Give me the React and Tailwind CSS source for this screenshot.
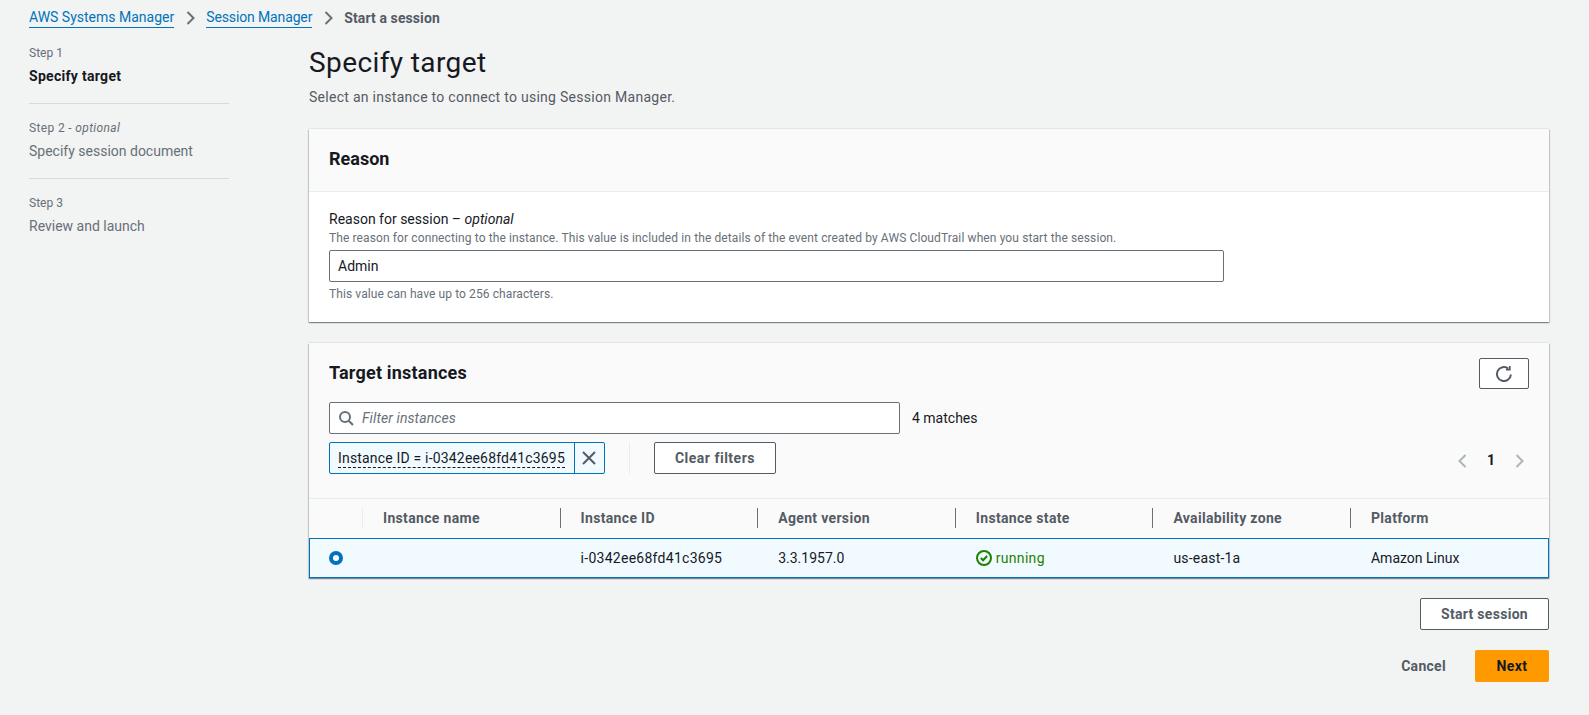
const Chevron = ({ dir = "right", className = "" }) => (
  <svg width="16" height="16" viewBox="0 0 16 16" fill="none" stroke="currentColor" strokeWidth="2" className={className}>
    <path d={dir === "right" ? "M5.5 2l6 6-6 6" : "M10.5 2l-6 6 6 6"} />
  </svg>
);

const Step = ({ label, opt, title, active, last }) => (
  <li className={`w-[200px] pb-[17px] ${last ? "" : "border-b border-[#d5dbdb] mb-[16px]"}`}>
    <div className={`text-[12px] leading-[16px] text-[#687078] ${opt ? "tracking-[0.35px]" : ""}`}>
      {label}
      {opt && <> - <i>optional</i></>}
    </div>
    <div className={`mt-[5px] text-[14px] leading-[20px] ${active ? "font-bold text-[#16191f] tracking-[0.3px]" : "text-[#687078]"}`}>{title}</div>
  </li>
);

const Button = ({ children, className = "" }) => (
  <button className={`border border-[#545b64] bg-white rounded-[2px] text-[14px] font-bold text-[#545b64] flex items-center justify-center ${className}`}>
    {children}
  </button>
);

const cols = ["Instance name", "Instance ID", "Agent version", "Instance state", "Availability zone", "Platform"];

export default function App() {
  return (
    <div className="h-[715px] overflow-hidden bg-[#f2f3f3] text-[#16191f] font-['Roboto','Liberation_Sans',sans-serif]">
      <nav className="h-[36px] pl-[29px] flex items-center text-[14px] leading-[20px]">
        <a className="text-[#0073bb] border-b border-[#0073bb] leading-[19px]">AWS Systems Manager</a>
        <Chevron className="mx-[8px] text-[#687078]" />
        <a className="text-[#0073bb] border-b border-[#0073bb] leading-[19px] tracking-[-0.13px]">Session Manager</a>
        <Chevron className="mx-[8px] text-[#687078]" />
        <span className="font-bold text-[#545b64] tracking-[0.1px]">Start a session</span>
      </nav>

      <div className="flex pl-[29px] pr-[40px]">
        <aside className="w-[280px] shrink-0 pt-[9px]">
          <ol>
            <Step label="Step 1" title="Specify target" active />
            <Step label="Step 2" opt title="Specify session document" />
            <Step label="Step 3" title="Review and launch" last />
          </ol>
        </aside>

        <main className="flex-1 min-w-0 pt-[9px]">
          <h1 className="text-[28px] leading-[36px] font-normal tracking-[0.4px]">Specify target</h1>
          <p className="mt-[6px] text-[14px] leading-[20px] text-[#545b64] tracking-[0.28px]">Select an instance to connect to using Session Manager.</p>

          <section className="mt-[22px] bg-white shadow-[0_1px_1px_0_rgba(0,28,36,0.3),1px_1px_1px_0_rgba(0,28,36,0.15),-1px_1px_1px_0_rgba(0,28,36,0.15),0_-1px_1px_0_rgba(0,28,36,0.06)]">
            <div className="h-[63px] bg-[#fafafa] border-b border-[#eaeded] px-[20px] pb-[2px] flex items-center">
              <h2 className="text-[18px] leading-[24px] font-bold">Reason</h2>
            </div>
            <div className="px-[20px] pt-[17px] pb-[20px]">
              <div className="text-[14px] leading-[20px]">Reason for session – <i>optional</i></div>
              <div className="mt-[1px] text-[12px] leading-[16px] text-[#687078] tracking-[0.11px]">
                The reason for connecting to the instance. This value is included in the details of the event created by AWS CloudTrail when you start the session.
              </div>
              <div className="mt-[4px] w-[895px] h-[32px] border border-[#687078] rounded-[2px] bg-white px-[8px] flex items-center text-[14px]">Admin</div>
              <div className="mt-[4px] text-[12px] leading-[16px] text-[#687078] tracking-[0.1px]">This value can have up to 256 characters.</div>
            </div>
          </section>

          <section className="mt-[21px] bg-white shadow-[0_1px_1px_0_rgba(0,28,36,0.3),1px_1px_1px_0_rgba(0,28,36,0.15),-1px_1px_1px_0_rgba(0,28,36,0.15),0_-1px_1px_0_rgba(0,28,36,0.06)]">
            <div className="h-[156px] bg-[#fafafa] border-b border-[#eaeded] pl-[20px] pr-[20px] pt-[15px]">
              <div className="flex justify-between h-[31px]">
                <h2 className="mt-[3px] text-[18px] leading-[24px] font-bold tracking-[0.2px]">Target instances</h2>
                <Button className="w-[50px] h-[31px]">
                  <svg width="18" height="18" viewBox="0 0 18 18" fill="none" stroke="currentColor" strokeWidth="2">
                    <path d="M15.9 9.5a7 7 0 1 1-2.6-5.9" />
                    <path d="M14.8 1v3.6h-3.8" strokeWidth="1.7" />
                  </svg>
                </Button>
              </div>
              <div className="mt-[13px] flex items-center">
                <div className="w-[571px] h-[32px] border border-[#687078] rounded-[2px] bg-white pl-[8px] flex items-center">
                  <svg width="16" height="16" viewBox="0 0 16 16" fill="none" stroke="#687078" strokeWidth="2">
                    <circle cx="7" cy="7" r="5" />
                    <path d="M10.7 10.7L15 15" />
                  </svg>
                  <i className="ml-[8px] text-[14px] text-[#687078] tracking-[0.1px]">Filter instances</i>
                </div>
                <span className="ml-[12px] text-[14px]">4 matches</span>
              </div>
              <div className="mt-[8px] flex items-start">
                <div className="h-[32px] flex border border-[#0073bb] rounded-[2px] bg-[#f1faff]">
                  <div className="pl-[8px] pr-[9px] flex items-center text-[14px]">
                    <span className="border-b border-dashed border-[#16191f] leading-[18px] tracking-[0.18px]">Instance ID = i-0342ee68fd41c3695</span>
                  </div>
                  <div className="w-[30px] border-l border-[#0073bb] flex items-center justify-center text-[#545b64]">
                    <svg width="16" height="16" viewBox="0 0 16 16" fill="none" stroke="currentColor" strokeWidth="2">
                      <path d="M2 2l12 12M14 2L2 14" />
                    </svg>
                  </div>
                </div>
                <div className="ml-[24px] w-px h-[32px] bg-[#eaeded]" />
                <Button className="ml-[24px] w-[122px] h-[32px] tracking-[0.5px]">Clear filters</Button>
                <div className="ml-auto mt-[8px] mr-[2px] flex items-center gap-[10px]">
                  <Chevron dir="left" className="text-[#aab7b8]" />
                  <span className="w-[20px] text-center text-[14px] font-bold">1</span>
                  <Chevron className="text-[#aab7b8]" />
                </div>
              </div>
            </div>

            <div className="grid grid-cols-[54px_repeat(5,197.6px)_1fr] h-[39px] pb-[2px] bg-[#fafafa] items-center text-[14px] font-bold text-[#545b64] tracking-[0.33px]">
              <div className="h-[20px] border-r border-[#eaeded]" />
              {cols.map((c, i) => (
                <div key={c} className={`h-[20px] pl-[20px] leading-[20px] ${i < 5 ? "border-r border-[#687078]" : ""}`}>{c}</div>
              ))}
            </div>
            <div className="grid grid-cols-[53px_repeat(5,197.6px)_1fr] h-[40px] items-center bg-[#f1faff] border border-[#0073bb] text-[14px]">
              <div className="pl-[19px]">
                <div className="w-[14px] h-[14px] rounded-full border-[4px] border-[#0073bb] bg-white" />
              </div>
              <div />
              <div className="pl-[20px] tracking-[0.27px]">i-0342ee68fd41c3695</div>
              <div className="pl-[20px]">3.3.1957.0</div>
              <div className="pl-[20px] flex items-center gap-[4px] text-[#1d8102]">
                <svg width="16" height="16" viewBox="0 0 16 16" fill="none" stroke="currentColor" strokeWidth="2">
                  <circle cx="8" cy="8" r="7" />
                  <path d="M4.8 8l2.3 2.3 4-4.3" />
                </svg>
                <span className="tracking-[0.3px]">running</span>
              </div>
              <div className="pl-[20px] tracking-[0.2px]">us-east-1a</div>
              <div className="pl-[20px]">Amazon Linux</div>
            </div>
          </section>

          <div className="mt-[20px] flex justify-end">
            <Button className="w-[129px] h-[32px] tracking-[0.3px]">Start session</Button>
          </div>
          <div className="mt-[20px] flex justify-end items-center">
            <span className="text-[14px] font-bold text-[#545b64] tracking-[0.3px]">Cancel</span>
            <button className="ml-[29px] w-[74px] h-[32px] bg-[#ff9900] rounded-[2px] text-[14px] font-bold text-[#16191f] tracking-[0.4px]">Next</button>
          </div>
        </main>
      </div>
    </div>
  );
}
